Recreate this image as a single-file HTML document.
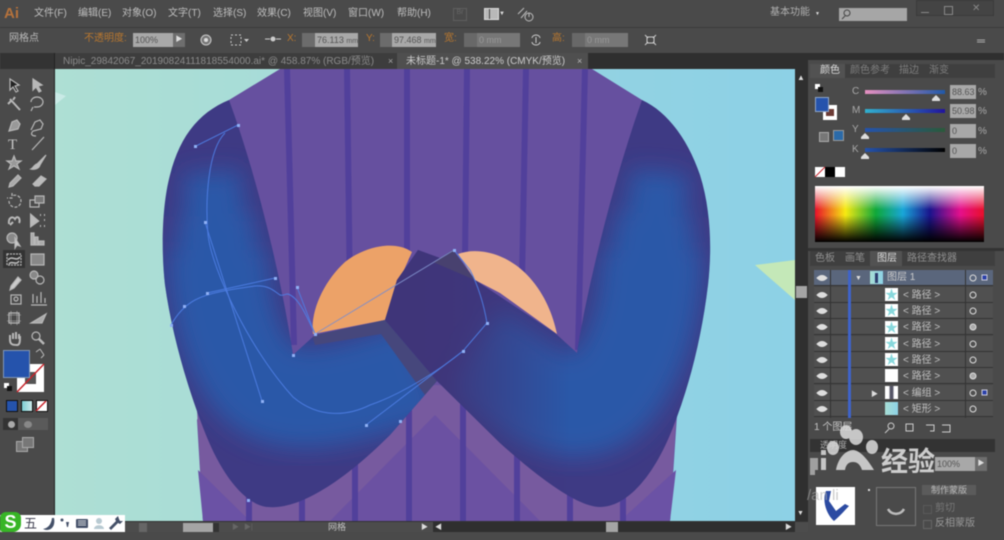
<!DOCTYPE html>
<html><head><meta charset="utf-8"><style>
html,body{margin:0;padding:0;background:#4a4a4a;overflow:hidden}
#p{position:relative;width:1004px;height:540px;overflow:hidden;background:#4a4a4a;font-family:"Liberation Sans","Noto Sans CJK SC",sans-serif;font-size:10px;color:#c4c4c4;filter:blur(.4px)}
#p div,#p span{position:absolute;white-space:nowrap;line-height:1}
svg{position:absolute;left:0;top:0}
.m{top:9px;font-size:10px;color:#bebebe}
.o{color:#b8772f;font-size:10px;top:34px}
.i{background:#a8a8a8;color:#555;font-size:9px;height:14px;line-height:14px!important;padding-left:2px;box-sizing:border-box}
.r{left:814px;width:179px;height:16px;background:#505050;border-bottom:1px solid #333;box-sizing:border-box}
.t{left:903px;font-size:10px;color:#c0c0c0}
.th{left:885px;width:13px;height:13px;background:#fff}
.tb{font-size:10px;color:#8f8f8f;top:254px}
.c{font-size:10px;color:#a8a8a8;left:852px}
.st{left:885px;font-size:13px;color:#88d8dc}
</style></head><body><div id="p">

<!-- canvas -->
<svg width="1004" height="540" viewBox="0 0 1004 540">
<defs>
<linearGradient id="bg" x1="0" x2="1" y1="0" y2="0"><stop offset="0" stop-color="#aedfd4"/><stop offset=".35" stop-color="#a6dcd9"/><stop offset=".7" stop-color="#93d3e2"/><stop offset="1" stop-color="#8dd1e6"/></linearGradient>
<linearGradient id="fade" x1="0" x2="1" y1="0" y2="0"><stop offset="0" stop-color="#3f3579"/><stop offset=".35" stop-color="#3f3579" stop-opacity=".9"/><stop offset="1" stop-color="#3f3579" stop-opacity="0"/></linearGradient>
<filter id="bl" x="-30%" y="-30%" width="160%" height="160%"><feGaussianBlur stdDeviation="12"/></filter>
<clipPath id="cv"><rect x="55" y="69" width="740" height="452"/></clipPath>
<clipPath id="la"><path d="M229 100C200 112 180 135 170 175C162 205 161 250 165 285C172 335 188 390 206 435C222 475 245 505 268 507C300 510 345 480 390 435L437 381L385 320L315 335L293 355C285 300 262 190 229 100Z"/></clipPath>
<clipPath id="ra"><path d="M642 100C668 112 688 140 700 175C711 210 712 250 708 285C702 335 690 385 672 430C652 480 625 507 600 507C575 507 530 470 500 443L437 381L385 320L397 280L418 250L440 258L453 250L475 280L555 333L577 353C585 300 610 190 642 100Z"/></clipPath>
</defs>
<g clip-path="url(#cv)">
<rect x="55" y="69" width="740" height="452" fill="url(#bg)"/>
<polygon points="55,92 66,96 55,105" fill="#c9eae6"/>
<polygon points="755,265 795,260 795,300" fill="#c4e8b8"/>
<!-- shirt -->
<path d="M280 69L229 100L240 300L197 420L203 521H670L677 415L642 100L592 69Z" fill="#66509f"/>
<path d="M197 410L436 385L677 400L670 521H203Z" fill="#775a9f"/>
<path d="M435 415L330 521H540Z" fill="#6b51a2"/>
<path d="M198 470L250 521H203ZM676 470L620 521H670Z" fill="#6b52a5"/>
<g stroke="#51409b" stroke-width="6" fill="none">
<path d="M287 69L294 345"/><path d="M347 69L350 300"/><path d="M407 69L407 260"/><path d="M467 69L465 260"/><path d="M526 69L522 280"/><path d="M585 69L578 350"/>
<path d="M249 490V521"/><path d="M302 490V521"/><path d="M355 450V521"/><path d="M409 400V521"/><path d="M463 400V521"/><path d="M517 450V521"/><path d="M570 490V521"/><path d="M623 490V521"/>
</g>
<!-- orange -->
<path d="M313 334C310 310 325 280 345 262C365 246 395 240 412 252L395 290L385 320Z" fill="#eca268"/>
<path d="M458 254C480 246 510 255 530 278C545 295 553 315 557 334L500 293L475 280Z" fill="#f0b48c"/>
<!-- left arm -->
<g clip-path="url(#la)">
<rect x="150" y="90" width="300" height="430" fill="#3e3a84"/>
<g fill="none" stroke="#2a59a8" filter="url(#bl)">
<path d="M212 172L218 262" stroke-width="58"/>
<path d="M216 215L219 290" stroke-width="78"/>
<path d="M218 250C218 300 228 345 255 380C285 410 340 400 425 368" stroke-width="100"/>
</g>
<polygon points="312,335 385,320 437,381 425,395 381,334 315,345" fill="#46477c"/>
</g>
<!-- right arm -->
<g clip-path="url(#ra)">
<rect x="380" y="90" width="340" height="430" fill="#3e3a84"/>
<g fill="none" stroke="#2a59a8" filter="url(#bl)">
<path d="M660 172L652 255" stroke-width="58"/>
<path d="M655 215L650 290" stroke-width="80"/>
<path d="M652 250C652 310 640 350 615 385C590 420 545 405 520 385L470 350" stroke-width="102"/>
</g>
<rect x="380" y="240" width="190" height="280" fill="url(#fade)"/>
<path d="M433 262L453 250L475 280Z" fill="#48416f"/>
</g>
<!-- handles & paths -->
<g fill="none" stroke="#4f7fe6" stroke-width="1" opacity=".9">
<path d="M196 146L238 125"/>
<path d="M225 133C208 150 205 200 208 235C212 270 250 350 293 397C320 420 350 415 370 405C400 395 440 370 463 351L487 323C484 305 478 285 470 270L454 250"/>
<path d="M205 222L262 401"/>
<path d="M207 293L275 278"/>
<path d="M171 325C176 316 184 306 195 300C210 292 235 289 255 286C270 285 275 292 280 295C283 296 285 294 288 294C300 298 308 320 315 334"/>
<path d="M297 287L315 334"/>
<path d="M463 351L366 425"/>
<path d="M315 334L454 250" stroke="#7f8ec9"/>
</g>
<g fill="#8fb0f5">
<rect x="194" y="145" width="3" height="3"/><rect x="237" y="124" width="3" height="3"/><rect x="204" y="221" width="3" height="3"/><rect x="261" y="400" width="3" height="3"/><rect x="206" y="292" width="3" height="3"/><rect x="274" y="277" width="3" height="3"/><rect x="170" y="324" width="3" height="3"/><rect x="183" y="305" width="3" height="3"/><rect x="292" y="354" width="3" height="3"/><rect x="314" y="333" width="3" height="3"/><rect x="453" y="249" width="3" height="3"/><rect x="462" y="350" width="3" height="3"/><rect x="486" y="322" width="3" height="3"/><rect x="399" y="420" width="3" height="3"/><rect x="365" y="424" width="3" height="3"/><rect x="247" y="499" width="3" height="3"/><rect x="296" y="286" width="3" height="3"/>
</g>
</g>
</svg>

<!-- top chrome -->
<div style="left:0;top:27px;width:1004px;height:1px;background:#3a3a3a"></div>
<div style="left:0;top:53px;width:1004px;height:16px;background:#2f2f2f"></div>
<div style="left:55px;top:53px;width:342px;height:16px;background:#3d3d3d"></div>
<div style="left:397px;top:53px;width:191px;height:16px;background:#4f4f4f"></div>
<span style="left:4px;top:6px;font-size:15px;font-weight:bold;color:#b5723c">Ai</span>
<span class="m" style="left:34px">文件(F)</span><span class="m" style="left:78px">编辑(E)</span><span class="m" style="left:122px">对象(O)</span><span class="m" style="left:168px">文字(T)</span><span class="m" style="left:213px">选择(S)</span><span class="m" style="left:257px">效果(C)</span><span class="m" style="left:303px">视图(V)</span><span class="m" style="left:348px">窗口(W)</span><span class="m" style="left:397px">帮助(H)</span>
<div style="left:453px;top:8px;width:12px;height:11px;border:1px solid #5f5f5f;font-size:7px;color:#666;text-align:center">Br</div>
<div style="left:484px;top:8px;width:13px;height:10px;background:#b8b8b8;border:1px solid #ddd"></div>
<div style="left:489px;top:9px;width:1px;height:10px;background:#444"></div>
<span style="left:499px;top:11px;font-size:6px;color:#ddd">▼</span>
<svg width="1004" height="54"><g fill="none" stroke="#bbb" stroke-width="1"><circle cx="529" cy="17" r="4"/><path d="M529 13V17M518 14L524 8M521 18L527 11"/></g></svg>
<span style="left:770px;top:8px;font-size:10px;color:#b0b0b0">基本功能</span><span style="left:815px;top:12px;font-size:5px;color:#ddd">▼</span>
<div style="left:839px;top:8px;width:68px;height:13px;background:#a6a6a6"></div>
<svg width="1004" height="54"><g fill="none" stroke="#444" stroke-width="1"><circle cx="847" cy="13" r="3"/><path d="M845 16L842 19"/></g></svg>
<div style="left:916px;top:0;width:78px;height:16px;background:#444;border:1px solid #3a3a3a;box-sizing:border-box"></div>
<div style="left:921px;top:12px;width:8px;height:1px;background:#888"></div>
<div style="left:944px;top:6px;width:7px;height:7px;border:1px solid #888"></div>
<span style="left:972px;top:4px;font-size:10px;color:#888">✕</span>

<span style="left:9px;top:34px;font-size:10px;color:#b8b8b8">网格点</span>
<span class="o" style="left:84px">不透明度:</span>
<div class="i" style="left:133px;top:33px;width:40px">100%</div>
<div style="left:173px;top:33px;width:12px;height:14px;background:#6e6e6e;color:#ddd;font-size:7px;line-height:14px;text-align:center">▶</div>
<svg width="1004" height="54"><g fill="none" stroke="#ccc"><circle cx="206" cy="40" r="5" fill="#777"/><circle cx="206" cy="40" r="2" fill="#ddd" stroke="none"/><rect x="231" y="35" width="10" height="10" stroke-dasharray="2 2"/><path d="M265 39H270M276 39H281"/></g><circle cx="273" cy="39" r="2.500" fill="#ccc"/>
<path d="M244 39h5l-2.500 3z" fill="#ccc"/>
<g fill="none" stroke="#ccc"><path d="M532 38a4 3 0 0 1 8 0M532 42a4 3 0 0 0 8 0M536 37V43"/><path d="M645 35L648 38M656 35L653 38M645 45L648 42M656 45L653 42"/><rect x="647" y="37" width="7" height="6"/></g>
<path d="M977 40h8M977 42h8" stroke="#aaa"/></svg>
<span class="o" style="left:287px">X:</span>
<div style="left:302px;top:33px;width:13px;height:14px;background:#6c6c6c"></div>
<div class="i" style="left:315px;top:33px;width:43px">76.113 <span style="position:static;font-size:7px">mm</span></div>
<span class="o" style="left:366px">Y:</span>
<div style="left:380px;top:33px;width:12px;height:14px;background:#6c6c6c"></div>
<div class="i" style="left:392px;top:33px;width:44px">97.468 <span style="position:static;font-size:7px">mm</span></div>
<span class="o" style="left:444px">宽:</span>
<div style="left:464px;top:33px;width:13px;height:14px;background:#686868"></div>
<div class="i" style="left:477px;top:33px;width:43px;background:#777;color:#999">0 mm</div>
<span class="o" style="left:552px">高:</span>
<div style="left:572px;top:33px;width:13px;height:14px;background:#686868"></div>
<div class="i" style="left:585px;top:33px;width:43px;background:#777;color:#999">0 mm</div>

<span style="left:63px;top:57px;font-size:10px;color:#8b8b8b">Nipic_29842067_20190824111818554000.ai* @ 458.87% (RGB/预览)</span>
<span style="left:388px;top:57px;font-size:9px;color:#aaa">×</span>
<span style="left:406px;top:57px;font-size:10px;color:#ccc">未标题-1* @ 538.22% (CMYK/预览)</span>
<span style="left:577px;top:57px;font-size:9px;color:#bbb">×</span>

<!-- left tools -->
<div style="left:54px;top:53px;width:1px;height:468px;background:#222"></div>
<div style="left:0;top:53px;width:54px;height:16px;background:#333"></div>
<div style="left:3px;top:250px;width:22px;height:18px;background:#333"></div>
<svg width="60" height="460"><g fill="none" stroke="#b8b8b8" stroke-width="1.200">
<path d="M10 79L10 90L13 87L16 92L18 91L15 86L19 85Z" fill="#222"/>
<path d="M33 79L33 90L36 87L39 92L41 91L38 86L42 85Z" fill="#b8b8b8"/>
<path d="M10 99L20 110M12 100L8 104M13 100L15 97" stroke-width="2"/><path d="M31 102a6 5 0 1 1 6 5l-3 0M33 107l-2 4"/>
<path d="M9 131L12 122L17 120L20 124L18 129L9 131Z" fill="#999"/>
<path d="M31 130L35 122L40 120L43 124L41 129L33 131C30 134 32 136 36 136"/>
<text x="8" y="149" font-family="Liberation Serif" font-size="15" fill="#c8c8c8" stroke="none">T</text>
<path d="M32 150L44 137"/>
<path d="M14 156L16 161L21 161L17 164L19 169L14 166L9 169L11 164L7 161L12 161Z" fill="#999"/>
<path d="M46 155L37 164C34 165 33 168 31 169C36 170 39 168 40 165Z" fill="#bbb"/>
<path d="M9 187L10 183L18 175L21 178L13 186Z" fill="#aaa"/>
<path d="M33 184L41 176L46 179L39 186L35 186Z" fill="#bbb"/>
<path d="M9 201a6 6 0 1 0 3-5M12 193V198H7" stroke-dasharray="3 1.500"/>
<rect x="30" y="200" width="9" height="7"/><rect x="35" y="196" width="9" height="7" fill="#777"/>
<path d="M9 224C8 217 13 216 15 219C18 214 21 220 19 223M10 225L13 222" stroke-width="2"/>
<path d="M31 215L38 221L31 226ZM40 215h1M44 215h1M44 220h1M40 226h1M44 226h1" fill="#bbb" stroke-width="2"/>
<circle cx="12" cy="238" r="5" fill="#888"/><path d="M15 238L20 246L17 245L15 248Z" fill="#ccc"/>
<path d="M31 233H34V245H31ZM35 237H38V245H35ZM39 241H44V245H39Z" fill="#aaa"/>
<path d="M7 254h14v11H7z" stroke-dasharray="2 1" fill="#333"/><path d="M8 260C12 255 16 262 20 257M9 264C12 260 16 266 19 261" stroke-width="1.600"/>
<rect x="31" y="254" width="13" height="11" fill="#888"/>
<path d="M11 286L18 277L21 280L14 288L10 290Z" fill="#ccc"/>
<circle cx="34" cy="275" r="4" fill="#888"/><circle cx="40" cy="280" r="4"/>
<rect x="11" y="295" width="10" height="9"/><circle cx="16" cy="299" r="2"/><path d="M33 303V294M37 303V296M41 303V292M45 303V298M31 305H47"/>
<rect x="9" y="313" width="10" height="10"/><path d="M7 315H21M7 321H21M11 311V325M17 311V325" stroke-width=".6"/>
<path d="M31 323L46 314L42 323Z" fill="#aaa"/>
<path d="M10 335L10 340C10 345 14 345 17 345C20 345 20 341 20 336M13 333V339M16 332V339M19 334V339" stroke-width="2"/>
<circle cx="36" cy="336" r="4"/><path d="M39 339L44 344" stroke-width="2.500"/>
</g></svg>
<div style="left:17px;top:364px;width:27px;height:28px;background:#fff"></div>
<div style="left:25px;top:372px;width:11px;height:12px;background:#555"></div>
<svg width="60" height="400"><path d="M17 392L44 364" stroke="#c8242b" stroke-width="1.500"/><path d="M36 352L40 349M40 349L44 355M44 355L41 358" stroke="#bbb" fill="none"/></svg>
<div style="left:3px;top:350px;width:27px;height:28px;background:#2553ac;border:1px solid #7f96b8;box-sizing:border-box"></div>
<div style="left:4px;top:383px;width:5px;height:5px;background:#fff"></div>
<div style="left:7px;top:386px;width:5px;height:5px;background:#111"></div>
<div style="left:6px;top:400px;width:10px;height:10px;background:#2553ac;border:1px solid #111"></div>
<div style="left:21px;top:400px;width:10px;height:10px;background:linear-gradient(90deg,#7ccdd2,#cdeaea);border:1px solid #111"></div>
<div style="left:36px;top:400px;width:10px;height:10px;background:#fff;border:1px solid #111"></div>
<svg width="60" height="420"><path d="M36 411L46 401" stroke="#c8242b" stroke-width="1.500"/></svg>
<div style="left:3px;top:418px;width:15px;height:12px;background:#333"></div>
<div style="left:18px;top:418px;width:30px;height:12px;background:#5a5a5a"></div>
<div style="left:8px;top:421px;width:7px;height:7px;border-radius:50%;background:#aaa"></div>
<div style="left:24px;top:421px;width:8px;height:7px;border-radius:50%;background:#888"></div>
<div style="left:16px;top:441px;width:10px;height:9px;background:#777;border:1px solid #aaa"></div>
<div style="left:22px;top:437px;width:10px;height:9px;background:#777;border:1px solid #aaa"></div>

<!-- status bar & scrollbars -->
<div style="left:795px;top:69px;width:13px;height:452px;background:#2f2f2f"></div>
<span style="left:797px;top:74px;font-size:8px;color:#ddd">▲</span>
<div style="left:796px;top:286px;width:11px;height:12px;background:#a5a5a5"></div>
<span style="left:797px;top:510px;font-size:7px;color:#ddd">▼</span>
<div style="left:55px;top:521px;width:753px;height:11px;background:#4c4c4c;border-top:1px solid #333;box-sizing:border-box"></div>
<div style="left:433px;top:522px;width:362px;height:10px;background:#2f2f2f"></div>
<div style="left:606px;top:522px;width:12px;height:10px;background:#a5a5a5"></div>
<div style="left:183px;top:523px;width:30px;height:9px;background:#a5a5a5"></div>
<div style="left:213px;top:523px;width:6px;height:9px;background:#333"></div>
<span style="left:328px;top:523px;font-size:9px;color:#c0c0c0">网格</span>
<span style="left:421px;top:524px;font-size:7px;color:#ddd">▶</span>
<span style="left:435px;top:524px;font-size:7px;color:#ddd">◀</span>
<span style="left:785px;top:524px;font-size:7px;color:#ddd">▶</span>
<div style="left:139px;top:523px;width:8px;height:9px;background:#666"></div>
<span style="left:232px;top:524px;font-size:7px;color:#666">▶</span><span style="left:244px;top:524px;font-size:7px;color:#666">▶|</span>
<!-- IME -->
<div style="left:0;top:515px;width:125px;height:17px;background:#fff"></div>
<div style="left:0;top:512px;width:21px;height:20px;background:#37b526;border-radius:6px 6px 8px 3px;color:#fff;font-size:18px;font-weight:bold;text-align:center;line-height:20px">S</div>
<span style="left:24px;top:517px;font-size:13px;color:#445">五</span>
<svg width="130" height="540"><g fill="#445068"><path d="M52 518C51 525 48 528 43 529C49 532 56 528 54 518Z"/><circle cx="62" cy="520" r="1.500"/><path d="M66 522h3l-1 5h-1z"/><rect x="76" y="519" width="12" height="9" rx="1"/><path d="M124 517l-3 3 1 2-7 7 2 2 7-7 2 1 3-3-3 0-1-2z" transform="translate(-6 -1)"/></g><path d="M78 521h8M78 523h8M78 525h8" stroke="#fff" stroke-width=".7"/><circle cx="99" cy="521" r="3" fill="#b8cad2"/><path d="M94 529c0-5 10-5 10 0z" fill="#b8cad2"/></svg>

<!-- right panel -->
<div style="left:808px;top:53px;width:196px;height:487px;background:#4a4a4a"></div>
<div style="left:808px;top:53px;width:196px;height:7px;background:#2f2f2f"></div>
<div style="left:810px;top:64px;width:185px;height:14px;background:#3f3f3f"></div>
<div style="left:810px;top:64px;width:35px;height:14px;background:#525252"></div>
<span style="left:820px;top:66px;font-size:10px;color:#ddd">颜色</span>
<span style="left:850px;top:66px;font-size:10px;color:#7e7e7e">颜色参考</span><span style="left:899px;top:66px;font-size:10px;color:#7e7e7e">描边</span><span style="left:929px;top:66px;font-size:10px;color:#7e7e7e">渐变</span>
<div style="left:815px;top:84px;width:5px;height:5px;background:#fff"></div><div style="left:818px;top:87px;width:5px;height:5px;background:#111"></div>
<div style="left:823px;top:105px;width:14px;height:15px;background:#fff"></div>
<div style="left:826px;top:109px;width:8px;height:7px;background:#6c3b35"></div>
<div style="left:815px;top:97px;width:14px;height:15px;background:#2553ac;border:1px solid #8ea5c8;box-sizing:border-box"></div>
<div style="left:833px;top:130px;width:11px;height:11px;background:#2b6aa8;border:1px solid #999;box-sizing:border-box"></div>
<div style="left:819px;top:132px;width:8px;height:8px;background:#777;border:1px solid #aaa"></div>
<span class="c" style="top:87px">C</span><span class="c" style="top:106px">M</span><span class="c" style="top:125px">Y</span><span class="c" style="top:145px">K</span>
<div style="left:865px;top:90px;width:80px;height:4px;background:linear-gradient(90deg,#e690c0,#1f58a8)"></div>
<div style="left:865px;top:109px;width:80px;height:4px;background:linear-gradient(90deg,#31b2cf,#22149c)"></div>
<div style="left:865px;top:128px;width:80px;height:4px;background:linear-gradient(90deg,#2553ac,#2a5a3a)"></div>
<div style="left:865px;top:148px;width:80px;height:4px;background:linear-gradient(90deg,#2553ac,#000)"></div>
<svg width="1004" height="200"><g fill="#ddd"><path d="M932 99l4-4 4 4v2h-8z"/><path d="M902 118l4-4 4 4v2h-8z"/><path d="M861 137l4-4 4 4v2h-8z"/><path d="M861 157l4-4 4 4v2h-8z"/></g></svg>
<div class="i" style="left:950px;top:85px;width:26px">88.63</div><div class="i" style="left:950px;top:104px;width:26px">50.98</div><div class="i" style="left:950px;top:124px;width:26px">0</div><div class="i" style="left:950px;top:144px;width:26px">0</div>
<span style="left:978px;top:88px;color:#aaa">%</span><span style="left:978px;top:107px;color:#aaa">%</span><span style="left:978px;top:127px;color:#aaa">%</span><span style="left:978px;top:147px;color:#aaa">%</span>
<div style="left:815px;top:167px;width:10px;height:10px;background:#fff"></div><div style="left:825px;top:167px;width:10px;height:10px;background:#000"></div><div style="left:835px;top:167px;width:10px;height:10px;background:#fff"></div>
<svg width="1004" height="200"><path d="M815 177L825 167" stroke="#c8242b"/></svg>
<div style="left:815px;top:186px;width:169px;height:56px;background:linear-gradient(180deg,rgba(255,255,255,1),rgba(255,255,255,0) 42%,rgba(0,0,0,0) 52%,#000 100%),linear-gradient(90deg,#e8102a 0,#f6ea12 18%,#0fa83a 36%,#19a6d8 52%,#1a148c 68%,#e5108c 86%,#e8102a 100%)"></div>

<!-- layers -->
<div style="left:808px;top:248px;width:196px;height:3px;background:#333"></div>
<div style="left:810px;top:251px;width:185px;height:15px;background:#3f3f3f"></div>
<div style="left:870px;top:251px;width:32px;height:15px;background:#525252"></div>
<span class="tb" style="left:815px">色板</span><span class="tb" style="left:845px">画笔</span><span class="tb" style="left:877px;color:#ddd">图层</span><span class="tb" style="left:907px">路径查找器</span>
<div class="r" style="top:270px;background:#5a667c"></div>
<div class="r" style="top:287px"></div><div class="r" style="top:303px"></div><div class="r" style="top:319px"></div><div class="r" style="top:336px"></div><div class="r" style="top:352px"></div><div class="r" style="top:368px"></div><div class="r" style="top:385px"></div><div class="r" style="top:401px"></div>
<div style="left:830px;top:270px;width:1px;height:148px;background:#333"></div>
<div style="left:965px;top:270px;width:1px;height:148px;background:#333"></div>
<div style="left:848px;top:270px;width:3px;height:148px;background:#3f63c9"></div>
<div class="th" style="left:870px;top:271px;background:linear-gradient(90deg,#a7ddd4,#8ed2e6)"></div>
<div style="left:875px;top:273px;width:3px;height:10px;background:#2d3c6e"></div>
<span style="left:887px;top:273px;font-size:10px;color:#ccc">图层 1</span>
<span style="left:855px;top:275px;font-size:7px;color:#ddd">▼</span>
<div class="th" style="top:288px"></div><div class="th" style="top:304px"></div><div class="th" style="top:321px"></div><div class="th" style="top:337px"></div><div class="th" style="top:353px"></div><div class="th" style="top:369px"></div>
<div class="th" style="top:386px;background:linear-gradient(90deg,#fff 30%,#556 40%,#556 60%,#fff 70%)"></div>
<div class="th" style="top:402px;background:linear-gradient(90deg,#a7ddd4,#8ed2e6)"></div>
<span class="st" style="top:288px">★</span><span class="st" style="top:304px">★</span><span class="st" style="top:321px">★</span><span class="st" style="top:337px">★</span><span class="st" style="top:353px">★</span>
<span class="t" style="top:291px">&lt; 路径 &gt;</span><span class="t" style="top:307px">&lt; 路径 &gt;</span><span class="t" style="top:323px">&lt; 路径 &gt;</span><span class="t" style="top:340px">&lt; 路径 &gt;</span><span class="t" style="top:356px">&lt; 路径 &gt;</span><span class="t" style="top:372px">&lt; 路径 &gt;</span><span class="t" style="top:389px">&lt; 编组 &gt;</span><span class="t" style="top:405px">&lt; 矩形 &gt;</span>
<span style="left:871px;top:391px;font-size:7px;color:#ddd">▶</span>
<svg width="1004" height="540"><g fill="none" stroke="#ddd" stroke-width="1">
<path d="M817 278q5-5 10 0q-5 5-10 0zM817 295q5-5 10 0q-5 5-10 0zM817 311q5-5 10 0q-5 5-10 0zM817 327q5-5 10 0q-5 5-10 0zM817 344q5-5 10 0q-5 5-10 0zM817 360q5-5 10 0q-5 5-10 0zM817 376q5-5 10 0q-5 5-10 0zM817 393q5-5 10 0q-5 5-10 0zM817 409q5-5 10 0q-5 5-10 0z" fill="#ddd"/>
<circle cx="973" cy="278" r="3"/><circle cx="973" cy="295" r="3"/><circle cx="973" cy="311" r="3"/><circle cx="973" cy="327" r="3" fill="#aaa"/><circle cx="973" cy="344" r="3"/><circle cx="973" cy="360" r="3"/><circle cx="973" cy="376" r="3" fill="#aaa"/><circle cx="973" cy="393" r="3"/><circle cx="973" cy="409" r="3"/></g>
<rect x="982" y="275" width="5" height="5" fill="#2a3fa8" stroke="#ccd"/><rect x="982" y="390" width="5" height="5" fill="#2a3fa8" stroke="#ccd"/>
<g fill="none" stroke="#ccc"><circle cx="891" cy="426" r="3"/><path d="M889 429L885 433"/><rect x="906" y="424" width="7" height="7"/><path d="M926 425h8v6h-4M942 425h8v7h-8"/></g></svg>
<span style="left:814px;top:423px;font-size:10px;color:#c4c4c4">1 个图层</span>

<!-- transparency -->
<div style="left:810px;top:439px;width:185px;height:13px;background:#333"></div>
<span style="left:820px;top:441px;font-size:9px;color:#aaa">透明度</span>
<div class="i" style="left:935px;top:457px;width:40px">100%</div>
<div style="left:975px;top:457px;width:12px;height:14px;background:#6e6e6e;color:#ddd;font-size:7px;line-height:14px;text-align:center">▶</div>
<div style="left:808px;top:473px;width:196px;height:67px;background:#4a4a4a"></div>
<div style="left:816px;top:487px;width:39px;height:38px;background:#fff"></div>
<svg width="1004" height="540"><path d="M826 491C822 500 826 514 834 521C840 516 845 510 849 506L845 504L836 511L829 501L831 491Z" fill="#2c4ba2"/><rect x="876.500" y="487.500" width="39" height="38" fill="none" stroke="#777"/><path d="M888 509a9 9 0 0 0 16 0" fill="none" stroke="#bbb" stroke-width="2.500"/></svg>
<div style="left:922px;top:485px;width:54px;height:10px;background:#5b5b5b;color:#bbb;font-size:9px;text-align:center;line-height:10px">制作蒙版</div>
<div style="left:868px;top:489px;width:2px;height:2px;background:#ddd"></div>
<div style="left:923px;top:505px;width:7px;height:7px;border:1px solid #5a5a5a"></div><div style="left:923px;top:520px;width:7px;height:7px;border:1px solid #666"></div>
<span style="left:935px;top:504px;font-size:10px;color:#777">剪切</span><span style="left:935px;top:519px;font-size:10px;color:#999">反相蒙版</span>

<!-- watermark -->
<svg width="1004" height="540"><g fill="#dcdcdc" opacity=".85">
<ellipse cx="846" cy="432" rx="6" ry="7"/><ellipse cx="856" cy="437" rx="7" ry="8"/><ellipse cx="833" cy="448" rx="6" ry="7"/><ellipse cx="872" cy="447" rx="6" ry="7"/>
<path d="M836 470C838 458 846 450 853 450C860 450 868 460 874 470L862 470C860 464 857 462 853 462C849 462 846 464 845 470Z"/>
<rect x="821" y="458" width="5" height="12"/><rect x="821" y="450" width="5" height="5"/><path d="M810 458h8v12h-3v5h-5z" opacity=".7"/></g></svg>
<span style="left:881px;top:449px;font-size:27px;font-weight:bold;color:#dcdcdc;opacity:.9">经验</span>
<span style="left:807px;top:488px;font-size:15px;color:#aaa;opacity:.6">/an li</span>
</div></body></html>
